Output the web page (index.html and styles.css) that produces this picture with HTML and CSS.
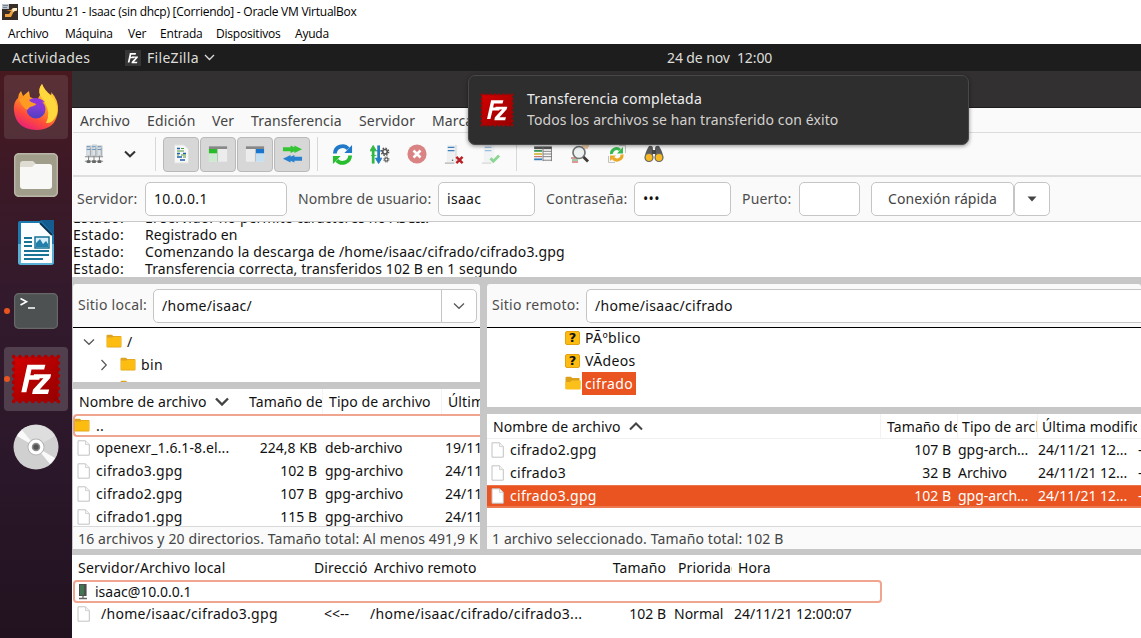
FILE: index.html
```html
<!DOCTYPE html>
<html lang="es">
<head>
<meta charset="utf-8">
<title>Ubuntu 21 - Isaac (sin dhcp) [Corriendo] - Oracle VM VirtualBox</title>
<link rel="stylesheet" href="styles.css">
</head>
<body>
<svg class="defs" width="0" height="0">
  <defs>
    <linearGradient id="fzRed" x1="0" y1="0" x2="1" y2="1"><stop offset="0" stop-color="#d40000"/><stop offset="1" stop-color="#930000"/></linearGradient>
    <linearGradient id="foxBody" x1=".8" y1="0" x2=".3" y2="1"><stop offset="0" stop-color="#ffe14a"/><stop offset=".45" stop-color="#ff9a1f"/><stop offset=".75" stop-color="#ff4a3d"/><stop offset="1" stop-color="#e81f78"/></linearGradient>
    <linearGradient id="foxGlobe" x1="0" y1="0" x2="0" y2="1"><stop offset="0" stop-color="#a03be0"/><stop offset="1" stop-color="#4f3fc0"/></linearGradient>
    <symbol id="folder" viewBox="0 0 16 15"><path d="M.5 2Q.5.8 1.600.8H6L7.200 2H14.500Q15.500 2 15.500 3V12.600Q15.500 13.600 14.500 13.600H1.500Q.5 13.600.5 12.600Z" fill="#dfa322"/><path d="M1 3.500H6.500L7.500 2.800H15V12.800H1Z" fill="#fcbc10"/></symbol>
    <symbol id="folderOpen" viewBox="0 0 16 15"><path d="M.5 2Q.5.8 1.600.8H6L7.200 2H14.500V13H.5Z" fill="#dda01a"/><path d="M.5 6H5L7 4.500H15.800V12.800Q15.600 13.600 14.600 13.600H2Q.5 13.600.5 12.600Z" fill="#fcc01a"/></symbol>
    <symbol id="page" viewBox="0 0 13 16"><path d="M1 .8H8.500L12.300 4.600V15.200H1Z" fill="#fff" stroke="#c2c2c2" stroke-width="1"/><path d="M8.500.8V4.600H12.300" fill="#f2f2f2" stroke="#ccc" stroke-width=".8"/></symbol>
    <symbol id="fzMark" viewBox="0 0 32 32"><path d="M8.800 4.800H23L22 8.600H12L11.100 13H19L18.200 16.500H10.300L8 26.500H4Z" fill="#fff"/><path d="M14 12.300H27.500L26.800 15.200L18.500 24.300H26L25 27.800H12.500L13.200 24.500L21.500 15.500H13.300Z" fill="#fff"/></symbol>
    <symbol id="fzLogo" viewBox="0 0 48 48"><rect x="2.500" y="2.500" width="43" height="43" fill="url(#fzRed)"/><rect x="2.500" y="2.500" width="43" height="43" fill="none" stroke="#ac0000" stroke-width="3.600" stroke-dasharray="0 6.143" stroke-linecap="round"/><use href="#fzMark" x="5" y="4" width="39" height="40"/></symbol>
  </defs>
</svg>

<header class="host-title">
  <svg width="16" height="16" viewBox="0 0 16 16"><rect width="16" height="16" fill="#392d28"/><path d="M4 6H9L11 4H15V7H12L9 13H3V10H7L9 7Z" fill="#f1a13c"/><path d="M10 5L12 4H15V6L11 8Z" fill="#fff0cf"/><path d="M0 0H7V5H0Z" fill="#b9c4ce"/><path d="M1 1.500H6M1 3.500H5" stroke="#66727d" stroke-width=".8"/></svg>
  <span>Ubuntu 21 - Isaac (sin dhcp) [Corriendo] - Oracle VM VirtualBox</span>
</header>
<nav class="host-menu"><span class="m1">Archivo</span><span class="m2">Máquina</span><span class="m3">Ver</span><span class="m4">Entrada</span><span class="m5">Dispositivos</span><span>Ayuda</span></nav>

<div class="topbar">
  <span class="activities">Actividades</span>
  <span class="app-icon"><svg width="14" height="14"><use href="#fzMark"/></svg></span>
  <span class="app-name">FileZilla</span>
  <svg width="11" height="7" viewBox="0 0 11 7"><path d="M1 1L5.500 5.500L10 1" fill="none" stroke="#ddd" stroke-width="1.300"/></svg>
  <span class="clock">24 de nov&nbsp; 12:00</span>
</div>

<div class="desktop">
  <aside class="dock">
    <div class="tile lit first"><svg width="46" height="48" viewBox="0 0 46 48"><path d="M27 12Q25 6 29 1Q32 8 38 12Q39 11 38 9Q46 17 45 28Q43 47 23 47Q3 46 1 28Q0 19 5 15Q5 11 8 8L10 13L16 8L17 14L24 17Z" fill="url(#foxBody)"/><path d="M27 12Q25 6 29 1Q31 8 38 13Q46 20 44 31Q40 41 33 40Q38 30 32 20Z" fill="#ffd83e"/><circle cx="23" cy="26" r="9.500" fill="url(#foxGlobe)"/><path d="M6 16Q11 13 18 15L25 19Q23 23 17 24L14 27Q8 23 6 16Z" fill="#ff9a22"/><path d="M16 17Q24 12 32 19Q28 18 27 20Q33 24 31 30Q27 21 18 19Z" fill="#8c35d9"/></svg></div>
    <div class="tile"><svg width="44" height="44" viewBox="0 0 44 44"><rect width="44" height="44" rx="5" fill="#a09d8b"/><rect x=".7" y=".7" width="42.600" height="42.600" rx="4.500" fill="none" stroke="#bab7a8" stroke-width="1.400"/><path d="M6 11Q6 8 9 8H19L22 11H35Q38 11 38 14V20H6Z" fill="#dedcd3"/><path d="M6 14H18L21 11H35Q38 11 38 14V33Q38 36 35 36H9Q6 36 6 33Z" fill="#f8f8f6"/></svg></div>
    <div class="tile"><svg width="38" height="46" viewBox="0 0 38 46"><path d="M3 1H25L37 14V42Q37 45 34 45H4Q1 45 1 42V3Q1 1 3 1Z" fill="#1c7ab1"/><path d="M3 24H1V42Q1 45 4 45H34Q37 45 37 42V24Z" fill="#5aafd4"/><path d="M4 3H23L35 15V43H4Z" fill="#fbfdfe"/><path d="M23 0H37V14Z" fill="#155d91"/><path d="M23 3L35 15" stroke="#0c314d" stroke-width="2"/><path d="M7 18H15M7 22H15M7 26H15M7 31H32M7 35H32M7 39H26" stroke="#187395" stroke-width="2"/><rect x="18" y="17" width="14" height="11" fill="#d8effa" stroke="#187395" stroke-width="1.500"/><path d="M19 27V23L23 19L26 24L29 21L31 24V27Z" fill="#2280aa"/></svg></div>
    <div class="tile run"><svg width="44" height="36" viewBox="0 0 44 36"><rect width="44" height="36" rx="5" fill="#4d5151"/><rect x=".6" y=".6" width="42.800" height="34.800" rx="4.500" fill="none" stroke="#686868" stroke-width="1.200"/><path d="M6.500 5.500L12.500 8.800L6.500 12M14 15H21" fill="none" stroke="#fff" stroke-width="1.600"/></svg></div>
    <div class="tile lit run"><svg width="50" height="50"><use href="#fzLogo"/></svg></div>
    <div class="tile"><svg width="46" height="46" viewBox="0 0 46 46"><circle cx="23" cy="23" r="22.500" fill="#d0d0d0"/><path d="M23 23L8 6A23 23 0 0 1 42 12Z" fill="#dedede"/><path d="M23 23L4 12A23 23 0 0 1 9 6Z M23 23L42 34A23 23 0 0 1 37 40Z" fill="#fafafa"/><circle cx="23" cy="23" r="8.500" fill="#b5b5b5"/><circle cx="23" cy="23" r="7.500" fill="#fff"/><circle cx="23" cy="23" r="3.500" fill="#555" stroke="#8c8c8c" stroke-width="1.500"/></svg></div>
  </aside>

  <main class="window">
    <div class="window-title"></div>
    <nav class="menu"><span class="f1">Archivo</span><span class="f2">Edición</span><span class="f3">Ver</span><span class="f4">Transferencia</span><span class="f5">Servidor</span><span>Marcadores</span></nav>
    <div class="toolbar">
      <span class="tool sites"><svg width="20" height="20" viewBox="0 0 22 22"><path d="M3 2H8V13H3ZM9 1H14V13H9ZM15 2H20V13H15Z" fill="#dce3e8" stroke="#b6c0c5" stroke-width=".7"/><path d="M3 3H7M9 3H13M15 3H19M3 6H7M9 6H13M15 6H19" stroke="#5c88b5"/><path d="M7 4V13M13 4V13M19 4V13" stroke="#9a9da0"/><path d="M1 14H21M1 19H21M5 13V21M11 13V21M17 13V21" stroke="#8a8d8c" stroke-width="1.200"/><path d="M3 18H7V21H3ZM9 18H13V21H9ZM15 18H19V21H15Z" fill="#656867"/></svg></span>
      <span class="tool drop"><svg width="12" height="8" viewBox="0 0 12 8"><path d="M1 1.500L6 6.300L11 1.500" fill="none" stroke="#333" stroke-width="2"/></svg></span>
      <i class="sep"></i>
      <span class="toggle"><svg width="15" height="20" viewBox="0 0 15 20"><path d="M.5 1H10L14.500 5V19H.5Z" fill="#f6f7f6" stroke="#dfe3df"/><path d="M3 4.500H6M3 9.500H6M9 9.500H12M3 13H8M6 16H11" stroke="#205eaf" stroke-width="1.300"/><path d="M7 4.500H10M3 7H10M7 11H12M3 11H5M9 13H12" stroke="#4e9c38" stroke-width="1.200"/></svg></span>
      <span class="toggle"><svg width="20" height="18" viewBox="0 0 22 19"><path d="M1 1H21V18H1Z" fill="#ececec"/><path d="M1 1H21V4H1Z" fill="#888"/><path d="M1 4H10V9H1Z" fill="#28bd28"/><path d="M1 9H10V18H1Z" fill="#cde9cf"/><path d="M10.500 4V18" stroke="#bbb"/></svg></span>
      <span class="toggle"><svg width="20" height="18" viewBox="0 0 22 19"><path d="M1 1H21V18H1Z" fill="#ececec"/><path d="M1 1H21V4H1Z" fill="#888"/><path d="M12 4H21V9H12Z" fill="#1976ce"/><path d="M12 9H21V18H12Z" fill="#c4dff1"/><path d="M11.500 4V18" stroke="#bbb"/></svg></span>
      <span class="toggle"><svg width="21" height="20" viewBox="0 0 22 20"><path d="M1 3H9V1L13 3V1L21 5L13 9V7L9 9V7H1Z" fill="#35c534"/><path d="M21 13H13V11L9 13V11L1 15L9 19V17L13 19V17H21Z" fill="#2880cf"/></svg></span>
      <i class="sep sep-b"></i>
      <span class="tool refresh"><svg width="21" height="21" viewBox="0 0 22 22"><path d="M3 10A8 8 0 0 1 17 5" fill="none" stroke="#207ac9" stroke-width="4"/><path d="M13 9.500H21V1Z" fill="#207ac9"/><path d="M19 12A8 8 0 0 1 5 17" fill="none" stroke="#28be30" stroke-width="4"/><path d="M9 12.500H1V21Z" fill="#28be30"/></svg></span>
      <span class="tool"><svg width="20" height="21" viewBox="0 0 22 22"><path d="M3.500 21V5" stroke="#33b843" stroke-width="3"/><path d="M0 7L3.500 1L7 7ZM1 12H7" fill="#33b843" stroke="#33b843" stroke-width="1"/><path d="M9.500 1V17" stroke="#237bc4" stroke-width="3"/><path d="M6 15L9.500 21L13 15ZM7 7H13" fill="#237bc4" stroke="#237bc4"/><g fill="none" stroke="#555"><circle cx="16.500" cy="8" r="2.500" stroke-width="1.800"/><circle cx="16.500" cy="8" r="4" stroke-width="1.600" stroke-dasharray="1.600 1.540"/><circle cx="18" cy="16.500" r="1.800" stroke-width="1.300"/><circle cx="18" cy="16.500" r="2.900" stroke-dasharray="1.200 1.080"/></g></svg></span>
      <span class="tool"><svg width="20" height="20" viewBox="0 0 20 20"><circle cx="10" cy="10" r="9.600" fill="#d98383"/><path d="M6.500 6.500L13.500 13.500M13.500 6.500L6.500 13.500" stroke="#fff" stroke-width="2.600"/></svg></span>
      <span class="tool"><svg width="21" height="21" viewBox="0 0 22 22"><path d="M4 1H15V19H4Z" fill="#eef0f1"/><path d="M13.500 1V18" stroke="#d3d8da"/><path d="M5 3.500H12M5 7H12" stroke="#3c80bd" stroke-width="1.300"/><path d="M2 20H12" stroke="#999"/><circle cx="10" cy="17" r=".8" fill="#555"/><path d="M14 13.500L20.500 20M20.500 13.500L14 20" stroke="#bd1f22" stroke-width="2.600"/></svg></span>
      <span class="tool"><svg width="21" height="21" viewBox="0 0 22 22"><path d="M4 1H15V19H4Z" fill="#f1f3f5"/><path d="M5 3.500H12M5 7H12" stroke="#9ac0e0" stroke-width="1.300"/><path d="M2 20H12" stroke="#ccc"/><path d="M11 15L14 18L20 12" fill="none" stroke="#8cd694" stroke-width="3"/></svg></span>
      <i class="sep sep-c"></i>
      <span class="tool"><svg width="20" height="16" viewBox="0 0 20 18"><path d="M0 1H20V17H0Z" fill="#f7f7f7"/><path d="M0 2H20" stroke="#555" stroke-width="3"/><path d="M0 5.500H9" stroke="#3d9955" stroke-width="2"/><path d="M0 9H9" stroke="#d8bc3d" stroke-width="2"/><path d="M0 12H9" stroke="#bc4b3a"/><path d="M0 15H9" stroke="#347dbd" stroke-width="2"/><path d="M10 1V17M10 6H20M10 9H20M10 12H20M10 16H20M19.500 3V17" stroke="#777"/></svg></span>
      <span class="tool"><svg width="20" height="20" viewBox="0 0 20 20"><path d="M12 2H19M14 4H18" stroke="#d99750"/><path d="M1 14H7M2 18H8" stroke="#bd3638"/><path d="M2 16H8" stroke="#419b50"/><circle cx="9" cy="8.500" r="6" fill="#edf1f2" stroke="#727575" stroke-width="1.700"/><path d="M13.500 13L18 17.500" stroke="#3d3a37" stroke-width="2.800"/></svg></span>
      <span class="tool"><svg width="20" height="20" viewBox="0 0 20 20"><path d="M12 1.500H18.500V9M1.500 12V18.500H8" fill="#f7f7f7" stroke="#c1c1c1"/><path d="M4.500 10A5 5 0 0 1 13 6" fill="none" stroke="#38b950" stroke-width="3"/><path d="M10 9.500H16V3Z" fill="#38b950"/><path d="M15 10.500A5 5 0 0 1 6 14" fill="none" stroke="#e9a924" stroke-width="3"/><path d="M9 11.500H3V17Z" fill="#e9a924"/></svg></span>
      <span class="tool"><svg width="20" height="18" viewBox="0 0 20 18"><path d="M5 1Q9 0 9 4V14H1Q0 9 5 1ZM15 1Q11 0 11 4V14H19Q20 9 15 1Z" fill="#595b5d"/><path d="M8 5H12V9H8Z" fill="#444"/><circle cx="5" cy="12.500" r="4" fill="#f6b923" stroke="#666" stroke-width="1.200"/><circle cx="15" cy="12.500" r="4" fill="#f6b923" stroke="#666" stroke-width="1.200"/></svg></span>
    </div>
    <div class="quick">
      <span class="lab q1">Servidor:</span><span class="field w1">10.0.0.1</span>
      <span class="lab q2">Nombre de usuario:</span><span class="field w2">isaac</span>
      <span class="lab q3">Contraseña:</span><span class="field w3">•••</span>
      <span class="lab q4">Puerto:</span><span class="field w4"></span>
      <span class="btn connect">Conexión rápida</span><span class="btn arrow"><svg width="10" height="6" viewBox="0 0 10 6"><path d="M.5.5H9.500L5 5.500Z" fill="#444"/></svg></span>
    </div>
    <div class="log">
      <div><b>Estado:</b><span>El servidor no permite caracteres no ASCII.</span></div>
      <div><b>Estado:</b><span>Registrado en</span></div>
      <div><b>Estado:</b><span class="download">Comenzando la descarga de /home/isaac/cifrado/cifrado3.gpg</span></div>
      <div><b>Estado:</b><span>Transferencia correcta, transferidos 102 B en 1 segundo</span></div>
    </div>

    <div class="panes">
      <section class="pane local">
        <div class="site"><span class="lab site-label">Sitio local:</span><span class="field path">/home/isaac/</span><span class="combo"><svg width="12" height="8" viewBox="0 0 12 8"><path d="M1 1.500L6 6.300L11 1.500" fill="none" stroke="#555" stroke-width="1.200"/></svg></span></div>
        <div class="tree">
          <div class="node n-root"><svg width="12" height="8" viewBox="0 0 12 8"><path d="M1 1.500L6 6.300L11 1.500" fill="none" stroke="#555" stroke-width="1.200"/></svg><svg class="fold" width="16" height="15"><use href="#folder"/></svg><span>/</span></div>
          <div class="node n-child"><svg width="8" height="12" viewBox="0 0 8 12"><path d="M1.500 1L6.300 6L1.500 11" fill="none" stroke="#555" stroke-width="1.200"/></svg><svg class="fold" width="16" height="15"><use href="#folder"/></svg><span>bin</span></div>
          <div class="node n-child"><svg width="8" height="12" viewBox="0 0 8 12"></svg><svg class="fold" width="16" height="15"><use href="#folder"/></svg><span>boot</span></div>
        </div>
        <div class="list">
          <div class="row head"><span class="h-name">Nombre de archivo<svg width="14" height="9" viewBox="0 0 14 9"><path d="M1 1.500L7 7.500L13 1.500" fill="none" stroke="#444" stroke-width="2.400"/></svg></span><span>Tamaño de</span><span>Tipo de archivo</span><span>Última modificación</span></div>
          <div class="row focus"><span class="name up"><svg width="16" height="15"><use href="#folder"/></svg>..</span></div>
          <div class="row"><span class="name long"><svg width="13" height="16"><use href="#page"/></svg>openexr_1.6.1-8.el...</span><span class="num">224,8 KB</span><span>deb-archivo</span><span>19/11/21</span></div>
          <div class="row"><span class="name"><svg width="13" height="16"><use href="#page"/></svg>cifrado3.gpg</span><span class="num">102 B</span><span>gpg-archivo</span><span>24/11/21</span></div>
          <div class="row"><span class="name"><svg width="13" height="16"><use href="#page"/></svg>cifrado2.gpg</span><span class="num">107 B</span><span>gpg-archivo</span><span>24/11/21</span></div>
          <div class="row"><span class="name"><svg width="13" height="16"><use href="#page"/></svg>cifrado1.gpg</span><span class="num">115 B</span><span>gpg-archivo</span><span>24/11/21</span></div>
        </div>
        <div class="status">16 archivos y 20 directorios. Tamaño total: Al menos 491,9 K</div>
      </section>
      <section class="pane remote">
        <div class="site"><span class="lab site-label">Sitio remoto:</span><span class="field path">/home/isaac/cifrado</span></div>
        <div class="tree">
          <div class="node"><span class="unknown">?</span><span>PÃºblico</span></div>
          <div class="node"><span class="unknown">?</span><span>VÃ­deos</span></div>
          <div class="node"><svg width="16" height="15"><use href="#folderOpen"/></svg><span class="picked">cifrado</span></div>
        </div>
        <div class="list">
          <div class="row head"><span class="h-name">Nombre de archivo<svg width="14" height="9" viewBox="0 0 14 9"><path d="M1 7.500L7 1.500L13 7.500" fill="none" stroke="#444" stroke-width="2"/></svg></span><span>Tamaño de</span><span>Tipo de archivo</span><span>Última modificación</span></div>
          <div class="row"><span class="name"><svg width="13" height="16"><use href="#page"/></svg>cifrado2.gpg</span><span class="num">107 B</span><span>gpg-arch...</span><span>24/11/21 12...</span><span>-rw</span></div>
          <div class="row"><span class="name"><svg width="13" height="16"><use href="#page"/></svg>cifrado3</span><span class="num">32 B</span><span>Archivo</span><span>24/11/21 12...</span><span>-rw</span></div>
          <div class="row selected"><span class="name"><svg width="13" height="16"><use href="#page"/></svg>cifrado3.gpg</span><span class="num">102 B</span><span>gpg-arch...</span><span>24/11/21 12...</span><span>-rw</span></div>
        </div>
        <div class="status">1 archivo seleccionado. Tamaño total: 102 B</div>
      </section>
    </div>

    <section class="queue">
      <div class="row head"><span>Servidor/Archivo local</span><span>Dirección</span><span>Archivo remoto</span><span class="num">Tamaño</span><span>Prioridad</span><span>Hora</span></div>
      <div class="row focus"><span class="server"><svg width="10" height="16" viewBox="0 0 10 16"><path d="M1 0H9V12H1Z" fill="#4b514c"/><path d="M2 1H6V11H2Z" fill="#447653"/><path d="M8.500 0V12" stroke="#999"/><path d="M5 12V15M1 14.500H9" stroke="#666" stroke-width="1.300"/></svg>isaac@10.0.0.1</span></div>
      <div class="row"><span class="name"><svg width="13" height="16"><use href="#page"/></svg>/home/isaac/cifrado3.gpg</span><span class="dir">&lt;&lt;--</span><span class="wide">/home/isaac/cifrado/cifrado3...</span><span class="num">102 B</span><span>Normal</span><span>24/11/21 12:00:07</span></div>
    </section>
  </main>
</div>

<div class="toast">
  <svg width="34" height="34"><use href="#fzLogo"/></svg>
  <div class="toast-text"><p class="t1">Transferencia completada</p><p class="t2">Todos los archivos se han transferido con éxito</p></div>
</div>
</body>
</html>
```

FILE: styles.css
```css
* { box-sizing: border-box; }
body { margin: 0; width: 1141px; height: 638px; overflow: hidden; background: #fff; color: #111; font: 14px/17px "Noto Sans", "Open Sans", sans-serif; white-space: nowrap; }
svg { display: block; flex: none; }
.defs { position: absolute; }
p { margin: 0; }

.host-title { height: 24px; display: flex; align-items: center; gap: 4px; padding-left: 2px; font: 12px/16px "Open Sans", sans-serif; color: #000; letter-spacing: -.25px; }
.host-menu { height: 20px; display: flex; padding-left: 8px; font: 12px/20px "Open Sans", sans-serif; color: #000; letter-spacing: -.2px; }
.m1 { width: 57px; } .m2 { width: 63px; } .m3 { width: 32px; } .m4 { width: 56px; } .m5 { width: 79px; }

.topbar { position: relative; height: 27px; display: flex; align-items: center; padding-left: 12px; background: #1d1d1d; color: #deddda; }
.activities { width: 113px; letter-spacing: .33px; }
.app-icon { width: 16px; height: 16px; padding: 1px; background: #363636; }
.app-name { width: 57px; margin-left: 6px; letter-spacing: .3px; }
.clock { margin-left: 452px; letter-spacing: -.1px; }

.desktop { display: flex; height: 567px; }
.dock { width: 72px; padding: 4px; display: flex; flex-direction: column; gap: 4px; background: linear-gradient(#48191f 0, #3d1926 100px, #321a2c 230px, #2a1729 400px, #22121f); }
.tile { position: relative; height: 64px; display: flex; align-items: center; justify-content: center; border-radius: 4px; }
.lit { background: rgba(255,255,255,.17); }
.first { background: rgba(255,255,255,.1); }
.run::before { content: ""; position: absolute; left: 0; top: 29px; width: 6px; height: 6px; border-radius: 50%; background: #e95420; }

.window { flex: 1; min-width: 0; padding-left: 1px; background: #fff; }
.window-title { height: 37px; margin-left: -1px; background: #323031; border-bottom: 1px solid #1e1c1d; }
.menu { height: 25px; display: flex; padding-left: 7px; background: #fafafa; border-bottom: 1px solid #dcdcdc; line-height: 25px; color: #444; letter-spacing: .15px; }
.f1 { width: 67px; } .f2 { width: 65px; } .f3 { width: 39px; } .f4 { width: 108px; } .f5 { width: 73px; }
.toolbar { height: 44px; display: flex; align-items: center; padding-left: 2px; background: #fafafa; border-bottom: 2px solid #dedede; }
.tool { width: 37px; display: flex; justify-content: center; }
.drop { width: 35px; }
.sep { width: 1px; height: 34px; background: #d8d8d8; margin: 0 7px 0 8px; }
.toggle { width: 36px; height: 35px; margin-right: 1px; border: 1px solid #b9b9b9; border-radius: 4px; background: #d7d7d7; display: flex; align-items: center; justify-content: center; }
.sep-b { margin: 0 6px; }
.sep-c { margin: 0 7px 0 7px; }
.quick { height: 45px; display: flex; align-items: center; padding-left: 4px; background: #fafafa; border-bottom: 1px solid #c9c9c9; }
.lab { color: #4d4d4d; padding-bottom: 2px; letter-spacing: .2px; }
.field { height: 34px; border: 1px solid #c5c5c5; border-radius: 5px; background: #fff; padding-left: 8px; line-height: 32px; color: #111; letter-spacing: .3px; }
.q1 { width: 68px; } .w1 { width: 142px; }
.q2 { width: 140px; margin-left: 11px; letter-spacing: .1px; } .w2 { width: 97px; }
.q3 { width: 88px; margin-left: 11px; } .w3 { width: 97px; }
.q4 { width: 57px; margin-left: 11px; } .w4 { width: 61px; }
.btn { height: 34px; border: 1px solid #c5c5c5; border-radius: 5px; background: #fff; display: flex; align-items: center; justify-content: center; color: #444; }
.connect { width: 143px; margin-left: 11px; padding-bottom: 2px; letter-spacing: .1px; }
.arrow { width: 36px; }
.log { height: 55px; display: flex; flex-direction: column; justify-content: flex-end; overflow: hidden; background: #fff; letter-spacing: .1px; }
.log div { display: flex; height: 17px; flex: none; }
.log b { width: 72px; font-weight: 400; letter-spacing: .4px; }
.log .download { letter-spacing: .17px; }

.panes { height: 278px; margin-left: -1px; padding: 7px 0 6px 1px; display: grid; grid-template-columns: 407px 1fr; gap: 7px; background: #c7c7c7; }
.pane { min-width: 0; display: flex; flex-direction: column; overflow: hidden; border-radius: 3px 3px 0 0; }
.site { height: 44px; flex: none; display: flex; align-items: center; padding-left: 5px; background: #fafafa; border-bottom: 1px solid #000; }
.site-label { width: 75px; letter-spacing: .25px; }
.local .path { width: 289px; border-radius: 5px 0 0 5px; }
.combo { width: 36px; height: 34px; margin-left: -1px; border: 1px solid #c5c5c5; border-radius: 0 5px 5px 0; background: #fff; display: flex; align-items: center; justify-content: center; }
.remote .site-label { width: 94px; }
.remote .path { flex: 1; border-right: 0; border-radius: 5px 0 0 5px; }
.tree { background: #fff; overflow: hidden; flex: none; display: flex; flex-direction: column; justify-content: flex-start; letter-spacing: .35px; }
.node { height: 23px; flex: none; display: flex; align-items: center; }
.local .tree { height: 54px; padding-top: 2px; }
.n-root { padding-left: 10px; } .n-root .fold { margin: 0 5px 0 11px; }
.n-child { padding-left: 27px; } .n-child .fold { margin: 0 5px 0 12px; }
.remote .tree { height: 79px; padding-left: 78px; }
.remote .node:first-child { height: 21px; padding-bottom: 2px; }
.unknown { width: 15px; height: 14px; margin-right: 5px; background: #fcbc10; border: 1px solid #e2a113; border-radius: 2px; font: bold 13px/12px "DejaVu Sans", sans-serif; text-align: center; letter-spacing: 0; }
.picked { margin-left: 1px; height: 23px; padding: 0 3px; background: #e95420; color: #fff; line-height: 23px; }

.list { margin-top: 7px; background: #fff; flex: 1; overflow: hidden; }
.row { display: grid; height: 23px; line-height: 21px; padding-bottom: 2px; }
.row > span { overflow: hidden; }
.local .row { grid-template-columns: 169px 81px 119px 60px; }
.remote .row { grid-template-columns: 393px 77px 80px 100px 4px; }
.row .name { display: flex; align-items: center; gap: 6px; padding-left: 4px; letter-spacing: .3px; }
.row .long { letter-spacing: .1px; }
.row .up { padding-left: 1px; }
.row .h-name { display: flex; align-items: center; gap: 8px; }
.local .head { height: 25px; line-height: 25px; padding-bottom: 0; }
.head { letter-spacing: .1px; }
.head > span { padding-left: 6px; }
.local .head > span:nth-child(2) { padding-left: 7px; }
.local .head > span:nth-child(n+2) { border-right: 1px solid #f4f4f4; }
.row .num { text-align: right; padding-right: 6px; }
.local .row:not(.head) > span:nth-child(3) { padding-left: 2px; }
.local .row:not(.head) > span:nth-child(4) { padding-left: 3px; }
.focus { border: 2px solid #f0a590; border-radius: 4px; line-height: 19px; padding-bottom: 0; }
.local .focus { border-right: 0; border-radius: 4px 0 0 4px; }
.local .focus .name { margin-left: -2px; }
.remote .head { height: 25px; line-height: 25px; padding-bottom: 0; border-bottom: 1px solid #f0f0f0; }
.remote .head > span:nth-child(n+2) { border-left: 1px solid #f2f2f2; padding-left: 4px; }
.remote .head > span:nth-child(2) { padding-left: 6px; }
.remote .row:not(.head) > span:nth-child(n+3) { padding-left: 1px; }
.selected { background: #e95420; color: #fff; border-top: 1px solid #ec764b; border-bottom: 2px solid #ed7950; line-height: 20px; padding-bottom: 0; }
.status { height: 23px; flex: none; padding-left: 5px; line-height: 23px; border-top: 1px solid #d9d9d9; background: #fafafa; color: #444; overflow: hidden; letter-spacing: .12px; }

.queue { height: 83px; background: #fff; }
.queue .row { grid-template-columns: 235px 60px 224px 80px 60px 150px; }
.queue .head { height: 25px; line-height: 25px; padding-bottom: 0; }
.queue .head > span:first-child { padding-left: 5px; letter-spacing: .2px; }
.queue .focus { width: 809px; line-height: 18px; }
.server { display: flex; align-items: center; gap: 7px; padding-left: 3px; }
.queue .name { gap: 11px; }
.queue .dir { padding-left: 16px; }
.queue .wide { letter-spacing: .33px; }
.queue .row:not(.head) > span:nth-child(3), .queue .row:not(.head) > span:nth-child(5), .queue .row:not(.head) > span:nth-child(6) { padding-left: 2px; }

.toast { position: absolute; left: 468px; top: 75px; width: 501px; height: 70px; display: flex; align-items: center; gap: 13px; padding-left: 11px; border: 1px solid #484848; border-radius: 7px; background: #2e2e2e; color: #eee; box-shadow: 0 1px 4px rgba(0,0,0,.45); line-height: 21px; }
.toast-text { padding-bottom: 2px; }
.t1 { letter-spacing: .2px; }
.t2 { color: #d3d1ce; letter-spacing: .1px; }
```
